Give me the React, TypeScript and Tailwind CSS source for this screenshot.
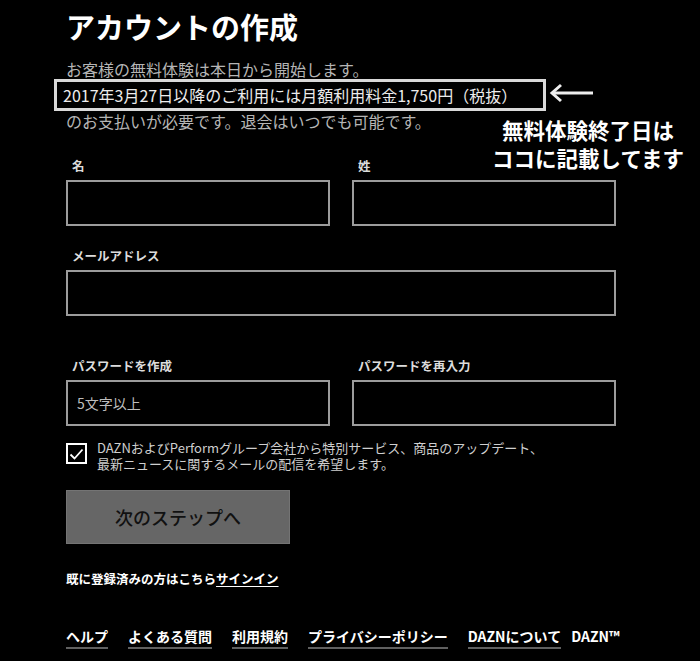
import React from 'react'

const font = { fontFamily: '"Noto Sans CJK JP", "Noto Sans", sans-serif' }

function Field({ label, placeholder }: { label: string; placeholder?: string }) {
  return (
    <div className="flex flex-col">
      <label className="pl-[6px] text-[12.5px] leading-[16px] font-bold text-[#dcdcdc]">{label}</label>
      <div className="mt-[6px] h-[46px] border-2 border-[#9c9c9c] flex items-center pl-[9px]">
        {placeholder && <span className="text-[14px] text-[#bdbdbd]">{placeholder}</span>}
      </div>
    </div>
  )
}

const footerLinks = ['ヘルプ', 'よくある質問', '利用規約', 'プライバシーポリシー', 'DAZNについて']

export default function App() {
  return (
    <div className="relative w-full min-h-[661px] bg-black overflow-hidden" style={font}>
      <div className="pl-[66px] pt-[8px] w-[616px]">
        <h1 className="text-[29px] leading-[36px] font-bold text-white">アカウントの作成</h1>

        <div className="mt-[14px] text-[16px]">
          <div className="leading-[22px] text-[#b5b5b5]">お客様の無料体験は本日から開始します。</div>
          <div className="-mt-[1px] -ml-[12px] w-[492px] h-[32px] border-[3px] border-[#d9d9d9] flex items-center pl-[6px] text-[#ececec]">
            2017年3月27日以降のご利用には月額利用料金1,750円（税抜）
          </div>
          <div className="leading-[20px] text-[#b5b5b5]">のお支払いが必要です。退会はいつでも可能です。</div>
        </div>

        <div className="mt-[27px] grid grid-cols-2 gap-x-[22px]">
          <Field label="名" />
          <Field label="姓" />
        </div>

        <div className="mt-[22px]">
          <Field label="メールアドレス" />
        </div>

        <div className="mt-[42px] grid grid-cols-2 gap-x-[22px]">
          <Field label="パスワードを作成" placeholder="5文字以上" />
          <Field label="パスワードを再入力" />
        </div>

        <div className="mt-[14px] flex items-start gap-[10px]">
          <div className="mt-[3px] w-[21px] h-[21px] border-2 border-white flex items-center justify-center shrink-0">
            <svg width="15" height="12" viewBox="0 0 15 12" fill="none">
              <path d="M1.5 6.5 L5.5 10.5 L13.5 1.5" stroke="white" strokeWidth="1.8" />
            </svg>
          </div>
          <div className="text-[13px] leading-[16px] text-[#cfcfcf] whitespace-nowrap">
            <div>DAZNおよびPerformグループ会社から特別サービス、商品のアップデート、</div>
            <div>最新ニュースに関するメールの配信を希望します。</div>
          </div>
        </div>

        <button className="mt-[18px] w-[224px] h-[54px] bg-[#666666] border border-[#747474] text-[18px] font-medium text-[#111111] flex items-center justify-center">
          次のステップへ
        </button>

        <div className="mt-[27px] text-[12.5px] leading-[16px] font-bold text-white">
          既に登録済みの方はこちら<span className="underline underline-offset-2">サインイン</span>
        </div>

        <div className="mt-[39px] flex items-start text-[14px] font-bold text-white whitespace-nowrap">
          {footerLinks.map((l, i) => (
            <span key={l} className={`shrink-0 leading-[20px] pb-[1px] border-b-2 border-[#606060] ${i > 0 ? 'ml-[20px]' : ''}`}>{l}</span>
          ))}
          <span className="shrink-0 ml-[10px] leading-[20px]">DAZN™</span>
        </div>
      </div>

      <svg className="absolute left-[548px] top-[82px]" width="46" height="22" viewBox="0 0 46 22" fill="none">
        <path d="M4 11 H45" stroke="#eeeeee" strokeWidth="3" />
        <path d="M13 3 L4 11 L13 19" stroke="#eeeeee" strokeWidth="3" />
      </svg>

      <div className="absolute left-[488px] top-[116px] w-[200px] text-center text-[21.5px] leading-[28px] font-bold text-white">
        <div>無料体験終了日は</div>
        <div>ココに記載してます</div>
      </div>
    </div>
  )
}
